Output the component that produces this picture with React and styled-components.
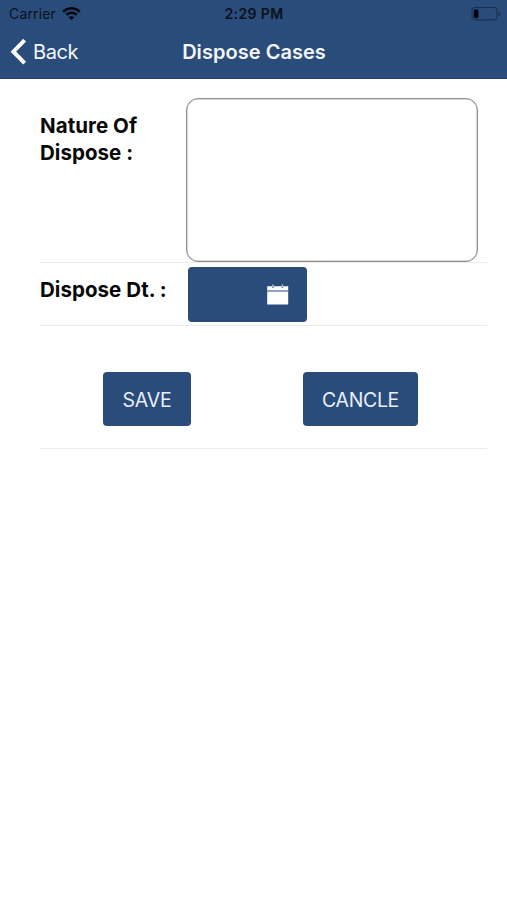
import React from "react";
import styled, { createGlobalStyle } from "styled-components";

const NAVY = "#2a4c7a";

const GlobalStyle = createGlobalStyle`
  * { box-sizing: border-box; }
  body { margin: 0; background: #fff; font-family: Inter, "Liberation Sans", sans-serif; }
`;

const Screen = styled.main`
  min-height: 900px;
  background: #fff;
`;

const Header = styled.header`
  height: 79px;
  background: ${NAVY};
  border-bottom: 1px solid #234473;
`;

const StatusBar = styled.div`
  display: grid;
  grid-template-columns: 1fr auto 1fr;
  align-items: center;
  height: 27px;
  padding: 0 6px 0 7px;
  color: #0a111c;
`;

const Carrier = styled.div`
  display: flex;
  align-items: center;
  gap: 6px;
  padding-left: 2px;
  font-size: 14px;
  line-height: 27px;
  letter-spacing: 0.15px;
`;

const Clock = styled.time`
  font-size: 14px;
  font-weight: 600;
  line-height: 27px;
  letter-spacing: 0.4px;
`;

const Battery = styled.svg`
  justify-self: end;
`;

const NavBar = styled.nav`
  display: grid;
  grid-template-columns: 1fr auto 1fr;
  align-items: center;
  height: 49px;
  padding: 0 10px;
  color: #f4f7fd;
`;

const BackButton = styled.button`
  display: flex;
  align-items: center;
  gap: 6px;
  padding: 0;
  border: 0;
  background: none;
  color: inherit;
  font: 400 20px/47px Inter, "Liberation Sans", sans-serif;
  letter-spacing: -0.45px;
`;

const BackText = styled.span`
  padding-top: 2px;
`;

const Title = styled.h1`
  margin: 0;
  padding: 2px 0 0 1px;
  font-size: 20px;
  font-weight: 600;
  line-height: 47px;
  letter-spacing: 0.04px;
`;

const Form = styled.form`
  padding: 19px 20px 0 40px;
`;

const Row = styled.div`
  display: grid;
  grid-template-columns: 145px 1fr;
  height: ${(p) => p.$height}px;
  border-bottom: 1px solid #ebebeb;
`;

const Label = styled.label`
  padding-top: ${(p) => p.$top}px;
  color: #080808;
  font-size: 20.5px;
  font-weight: 650;
  line-height: 27px;
  letter-spacing: 0.05px;
  white-space: nowrap;
`;

const NatureInput = styled.textarea`
  width: 292px;
  height: 164px;
  margin-left: 0.7px;
  border: 1px solid #8f8f8f;
  border-radius: 12px;
  background: #fff;
  box-shadow: inset 0 0 0 0.5px #b5b5b5;
  resize: none;
  outline: none;
`;

const SolidButton = styled.button`
  width: ${(p) => p.$width}px;
  height: 54px;
  padding: 2px 0 0;
  border: 0;
  border-radius: 4px;
  background: ${NAVY};
  color: #e8eefa;
  font: 400 19.5px/52px Inter, "Liberation Sans", sans-serif;
  letter-spacing: ${(p) => p.$spacing || 0}px;
`;

const DateButton = styled(SolidButton)`
  display: flex;
  align-items: center;
  justify-content: flex-end;
  height: 55px;
  margin: 4px 0 0 3px;
  padding: 0 18px 0 0;
`;

const Actions = styled.div`
  display: flex;
  gap: 112px;
  height: 123px;
  padding: 46px 0 0 63px;
  border-bottom: 1px solid #ebebeb;
`;

const WifiIcon = () => (
  <svg width="19" height="14" viewBox="0 0 19 14" fill="none" stroke="#05080e" strokeWidth="2.6">
    <path d="M1.2 4.7C5.9.1 13.1.1 17.8 4.7" />
    <path d="M4.3 7.8c3-2.8 7.4-2.8 10.4 0" />
    <path d="M9.5 13 6.7 10.2c1.6-1.4 4-1.4 5.6 0Z" fill="#05080e" stroke="none" />
  </svg>
);

const BatteryIcon = () => (
  <Battery width="30" height="14" viewBox="0 0 30 14">
    <rect x="1" y=".5" width="25" height="12.4" rx="3.2" fill="none" stroke="#1b3151" strokeWidth="1.1" />
    <rect x="2.8" y="2.4" width="4.6" height="8.8" rx="1.4" fill="#02050a" />
    <path d="M27.6 4.5c2.2.8 2.2 3.8 0 4.6Z" fill="#1b3151" />
  </Battery>
);

const ChevronIcon = () => (
  <svg width="17" height="26" viewBox="0 0 17 26" fill="none" stroke="#fff" strokeWidth="4">
    <path d="M14.6 1.2 3.4 12.7l11.2 11.5" />
  </svg>
);

const CalendarIcon = () => (
  <svg width="22" height="22" viewBox="0 0 22 22">
    <path d="M.2 2.2h21v4.4H.2zM.2 7.5h21v13H.2z" fill="#fff" />
    <path d="M.2 7h21" stroke="#8fa3c2" />
    <path d="M6 .5v3.5M15.4.5v3.5" stroke="#6f88ae" strokeWidth="1.7" />
    <path d="M6 .5v2.8M15.4.5v2.8" stroke="#dce5f3" strokeWidth=".7" />
  </svg>
);

export default function App() {
  return (
    <Screen>
      <GlobalStyle />
      <Header>
        <StatusBar>
          <Carrier>
            Carrier
            <WifiIcon />
          </Carrier>
          <Clock>2:29 PM</Clock>
          <BatteryIcon />
        </StatusBar>
        <NavBar>
          <BackButton type="button">
            <ChevronIcon />
            <BackText>Back</BackText>
          </BackButton>
          <Title>Dispose Cases</Title>
        </NavBar>
      </Header>
      <Form>
        <Row $height={165}>
          <Label htmlFor="nature" $top={14}>
            Nature Of
            <br />
            Dispose :
          </Label>
          <NatureInput id="nature" />
        </Row>
        <Row $height={63}>
          <Label $top={13}>Dispose Dt. :</Label>
          <DateButton type="button" $width={119} aria-label="Dispose date">
            <CalendarIcon />
          </DateButton>
        </Row>
        <Actions>
          <SolidButton type="button" $width={88} $spacing={-0.15}>SAVE</SolidButton>
          <SolidButton type="button" $width={115} $spacing={-0.35}>CANCLE</SolidButton>
        </Actions>
      </Form>
    </Screen>
  );
}
